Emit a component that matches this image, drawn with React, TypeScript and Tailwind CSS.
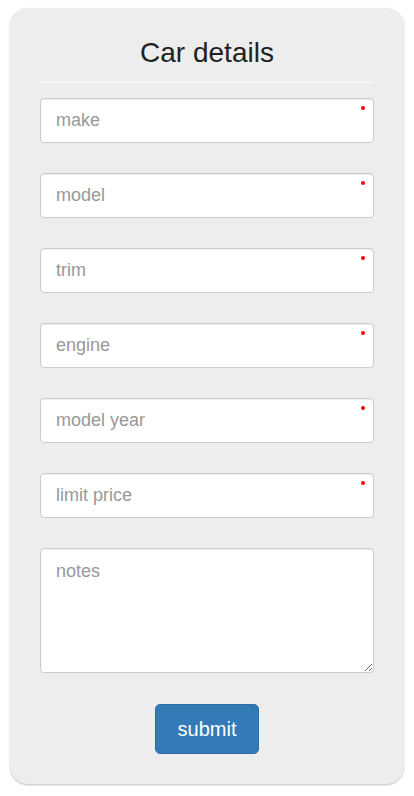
const fields = ["make", "model", "trim", "engine", "model year", "limit price"];

function RequiredInput({ placeholder }: { placeholder: string }) {
  return (
    <div className="relative">
      <input
        type="text"
        placeholder={placeholder}
        className="block h-[45px] w-full rounded-[4px] border border-[#cccccc] bg-white px-[15px] text-[18px] text-[#555] shadow-[inset_0_1px_1px_rgba(0,0,0,0.075)] outline-none placeholder:text-[#999]"
      />
      <span className="absolute right-[9px] top-[8px] h-[4px] w-[4px] rounded-full bg-[#ff0000]" />
    </div>
  );
}

export default function App() {
  return (
    <div className="min-h-[796px] bg-white pt-[8px] font-['Liberation_Sans',Arial,sans-serif]">
      <form className="mx-[10px] flex flex-col rounded-[18px] bg-[#ededed] px-[30px] pb-[30px] shadow-[0_1px_2px_rgba(0,0,0,0.25)]">
        <h2 className="border-b border-[#fbfbfb] pb-[14px] pt-[30px] text-center text-[28px] leading-[30px] text-[#222]">
          Car details
        </h2>
        <div className="mt-[15px] flex flex-col gap-[30px]">
          {fields.map((f) => (
            <RequiredInput key={f} placeholder={f} />
          ))}
          <textarea
            placeholder="notes"
            className="block h-[125px] w-full rounded-[4px] border border-[#cccccc] bg-white px-[15px] py-[10px] text-[18px] leading-[24px] text-[#555] shadow-[inset_0_1px_1px_rgba(0,0,0,0.075)] outline-none placeholder:text-[#999]"
          />
        </div>
        <div className="mt-[31px] flex justify-center">
          <button
            type="button"
            className="h-[50px] w-[104px] rounded-[5px] border border-[#2e6da4] bg-[#337ab7] text-[20px] text-white"
          >
            submit
          </button>
        </div>
      </form>
    </div>
  );
}
